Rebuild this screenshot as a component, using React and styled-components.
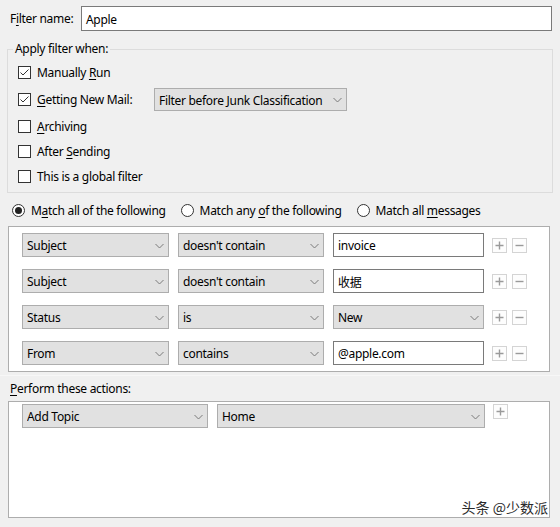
import React from "react";
import styled, { createGlobalStyle } from "styled-components";

const GlobalStyle = createGlobalStyle`
  html, body { margin: 0; padding: 0; background: #f0f0f0; }
  body { font-family: "Noto Sans", "Open Sans", "Noto Sans CJK SC", sans-serif; }
`;

const Window = styled.div`
  width: 560px;
  height: 527px;
  box-sizing: border-box;
  padding-top: 6px;
  background: #f0f0f0;
  color: #000;
  font-size: 12px;
  letter-spacing: -0.3px;
  font-family: "Noto Sans", "Noto Sans CJK SC", sans-serif;
  position: relative;
  overflow: hidden;
`;

const NameRow = styled.div`
  display: flex;
  align-items: center;
  height: 25px;
  padding: 0 8px 0 10px;
`;

const Label = styled.span`
  white-space: pre;
  width: ${(p) => (p.$width ? p.$width + "px" : "auto")};
  flex: none;
`;

const Key = styled.span`
  text-decoration: underline;
  text-underline-offset: 2px;
`;

const TextField = styled.div`
  box-sizing: border-box;
  height: ${(p) => p.$height || 25}px;
  width: ${(p) => (p.$width ? p.$width + "px" : "auto")};
  flex: ${(p) => (p.$width ? "none" : "1")};
  background: #fff;
  border: 1px solid #7a7a7a;
  display: flex;
  align-items: center;
  padding: 1px 0 0 4px;
  font-family: "Noto Sans", "Noto Sans CJK SC", sans-serif;
`;

const GroupBox = styled.fieldset`
  margin: 10px 7px 0 7px;
  border: 1px solid #dcdcdc;
  padding: 3px 10px 3px 10px;
  min-width: 0;
`;

const Legend = styled.legend`
  padding: 0 2px;
  margin-left: -5px;
  line-height: 16px;
`;

const CheckRow = styled.div`
  display: flex;
  align-items: center;
  height: ${(p) => p.$h || 25}px;
`;

const Box = styled.span`
  box-sizing: border-box;
  width: 13px;
  height: 13px;
  border: 1px solid #333;
  background: #fff;
  margin-right: 6px;
  flex: none;
  display: flex;
  align-items: center;
  justify-content: center;
`;

const CheckBox = ({ checked }) => (
  <Box>
    {checked && (
      <svg width="11" height="11" viewBox="0 0 11 11">
        <polyline points="1.5,5.5 4,8 9.5,2.5" fill="none" stroke="#333" strokeWidth="1" />
      </svg>
    )}
  </Box>
);

const SelectBox = styled.div`
  box-sizing: border-box;
  height: ${(p) => p.$height || 24}px;
  width: ${(p) => p.$width}px;
  flex: none;
  background: #e1e1e1;
  border: 1px solid #adadad;
  display: flex;
  align-items: center;
  padding: 1px 4px 0 4px;
`;

const SelectText = styled.span`
  flex: 1;
  white-space: nowrap;
  overflow: hidden;
`;

const Chevron = () => (
  <svg width="9" height="6" viewBox="0 0 9 6">
    <polyline points="0.5,1 4.5,5 8.5,1" fill="none" stroke="#7a7a7a" strokeWidth="1" />
  </svg>
);

const Select = ({ width, height, children }) => (
  <SelectBox $width={width} $height={height}>
    <SelectText>{children}</SelectText>
    <Chevron />
  </SelectBox>
);

const RadioRow = styled.div`
  display: flex;
  align-items: center;
  height: 20px;
  margin-top: 7px;
  padding-left: 12px;
`;

const RadioItem = styled.label`
  display: flex;
  align-items: center;
  margin-right: ${(p) => p.$gap}px;
  white-space: nowrap;
`;

const RadioCircle = styled.span`
  box-sizing: border-box;
  width: 13px;
  height: 13px;
  border-radius: 50%;
  border: 1px solid #333;
  background: #fff;
  margin-right: 6px;
  display: flex;
  align-items: center;
  justify-content: center;
  &::after {
    content: "";
    width: 7px;
    height: 7px;
    border-radius: 50%;
    background: ${(p) => (p.$on ? "#222" : "transparent")};
  }
`;

const Panel = styled.div`
  box-sizing: border-box;
  margin: ${(p) => p.$mt}px 10px 0 8px;
  height: ${(p) => p.$height}px;
  background: #fff;
  border: 1px solid #adadad;
  padding: ${(p) => p.$pt}px 13px 0 13px;
  display: flex;
  flex-direction: column;
  gap: 12px;
  position: relative;
`;

const RuleRow = styled.div`
  display: flex;
  align-items: flex-start;
  height: 24px;
`;

const Spacer = styled.span`
  width: ${(p) => p.$w}px;
  flex: none;
`;

const MiniBtn = styled.span`
  box-sizing: border-box;
  width: 15px;
  height: 15px;
  border: 1px solid #d4d4d4;
  background: #fdfdfd;
  margin-top: ${(p) => p.$mt}px;
  margin-left: ${(p) => p.$ml}px;
  display: flex;
  align-items: center;
  justify-content: center;
  flex: none;
`;

const Plus = ({ ml = 8, top = 5 }) => (
  <MiniBtn $ml={ml} $mt={top}>
    <svg width="9" height="9" viewBox="0 0 9 9">
      <path d="M4.5 0.5V8.5M0.5 4.5H8.5" stroke="#9a9a9a" strokeWidth="1.4" />
    </svg>
  </MiniBtn>
);

const Minus = () => (
  <MiniBtn $ml={5} $mt={5}>
    <svg width="9" height="9" viewBox="0 0 9 9">
      <path d="M0.5 4.5H8.5" stroke="#9a9a9a" strokeWidth="1.4" />
    </svg>
  </MiniBtn>
);

const Divider = styled.div`
  height: 1px;
  margin-top: 3px;
  background: #f7f7f7;
`;

const SectionLabel = styled.div`
  height: 16px;
  line-height: 16px;
  margin-top: 5px;
  padding-left: 10px;
`;

const Watermark = styled.div`
  position: absolute;
  right: 1px;
  bottom: 0px;
  font-family: "Noto Sans CJK SC", sans-serif;
  font-size: 14px;
  letter-spacing: 0;
  color: #2a2a2a;
  text-shadow: 0 0 2px #fff, 0 0 2px #fff, 1px 1px 1px #fff;
`;

const rules = [
  { field: "Subject", op: "doesn't contain", value: "invoice" },
  { field: "Subject", op: "doesn't contain", value: "收据" },
  { field: "Status", op: "is", value: "New", select: true },
  { field: "From", op: "contains", value: "@apple.com" },
];

export default function App() {
  return (
    <>
      <GlobalStyle />
      <Window>
        <NameRow>
          <Label $width={71}>
            F<Key>i</Key>lter name:
          </Label>
          <TextField>Apple</TextField>
        </NameRow>

        <GroupBox>
          <Legend>Apply filter when:</Legend>
          <CheckRow>
            <CheckBox checked />
            <Label>
              Manually <Key>R</Key>un
            </Label>
          </CheckRow>
          <CheckRow $h={29}>
            <CheckBox checked />
            <Label $width={117}>
              <Key>G</Key>etting New Mail:
            </Label>
            <Select width={193} height={23}>
              Filter before Junk Classification
            </Select>
          </CheckRow>
          <CheckRow>
            <CheckBox />
            <Label>
              <Key>A</Key>rchiving
            </Label>
          </CheckRow>
          <CheckRow>
            <CheckBox />
            <Label>
              After <Key>S</Key>ending
            </Label>
          </CheckRow>
          <CheckRow>
            <CheckBox />
            <Label>This is a global filter</Label>
          </CheckRow>
        </GroupBox>

        <RadioRow>
          <RadioItem $gap={15}>
            <RadioCircle $on />
            <Label>
              M<Key>a</Key>tch all of the following
            </Label>
          </RadioItem>
          <RadioItem $gap={15}>
            <RadioCircle />
            <Label>
              Match any <Key>o</Key>f the following
            </Label>
          </RadioItem>
          <RadioItem $gap={0}>
            <RadioCircle />
            <Label>
              Match all <Key>m</Key>essages
            </Label>
          </RadioItem>
        </RadioRow>

        <Panel $mt={6} $height={146} $pt={6}>
          {rules.map((r, i) => (
            <RuleRow key={i}>
              <Select width={147}>{r.field}</Select>
              <Spacer $w={9} />
              <Select width={146}>{r.op}</Select>
              <Spacer $w={9} />
              {r.select ? (
                <Select width={151}>{r.value}</Select>
              ) : (
                <TextField $width={151} $height={24}>
                  {r.value}
                </TextField>
              )}
              <Plus />
              <Minus />
            </RuleRow>
          ))}
        </Panel>

        <Divider />
        <SectionLabel>
          <Key>P</Key>erform these actions:
        </SectionLabel>

        <Panel $mt={4} $height={117} $pt={2}>
          <RuleRow>
            <Select width={186}>Add Topic</Select>
            <Spacer $w={9} />
            <Select width={268}>Home</Select>
            <Plus ml={8} top={0} />
          </RuleRow>
          <Watermark>头条 @少数派</Watermark>
        </Panel>
      </Window>
    </>
  );
}
